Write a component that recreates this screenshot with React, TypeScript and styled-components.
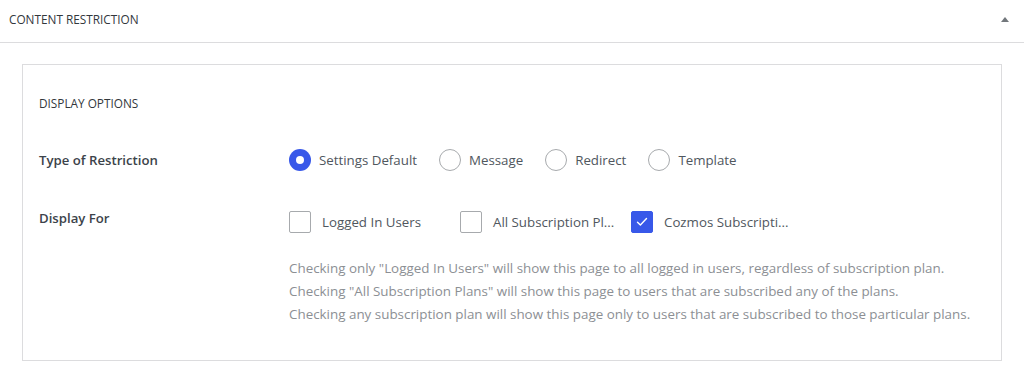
import React from "react";
import styled, { createGlobalStyle } from "styled-components";

const Global = createGlobalStyle`
  html, body { margin: 0; padding: 0; background: #ffffff; }
  body { font-family: "Open Sans", "Noto Sans", sans-serif; }
  * { box-sizing: border-box; }
`;

const Panel = styled.section`
  width: 1024px;
  background: #fff;
`;

const PanelHeader = styled.header`
  height: 43px;
  display: flex;
  align-items: center;
  justify-content: space-between;
  padding: 0 15px 4px 9px;
  border-bottom: 1px solid #dcdcde;
`;

const PanelTitle = styled.h2`
  margin: 0;
  font-size: 11.8px;
  font-weight: 400;
  color: #32373c;
`;

const Toggle = styled.span`
  width: 0;
  height: 0;
  border-left: 4px solid transparent;
  border-right: 4px solid transparent;
  border-bottom: 5px solid #72777c;
`;

const PanelBody = styled.div`
  padding: 21px 22px 15px 22px;
`;

const Box = styled.div`
  border: 1px solid #dcdcde;
  padding: 28px 16px 34px 16px;
`;

const SectionTitle = styled.h3`
  margin: 0;
  font-size: 11.8px;
  line-height: 20px;
  font-weight: 400;
  color: #32373c;
`;

const Row = styled.div<{ $top: number }>`
  display: flex;
  align-items: flex-start;
  margin-top: ${(p) => p.$top}px;
`;

const Label = styled.div<{ $lh: number }>`
  width: 250px;
  flex: none;
  font-size: 13.2px;
  font-weight: 600;
  color: #3c434a;
  line-height: ${(p) => p.$lh}px;
`;

const Field = styled.div`
  display: flex;
  flex-direction: column;
`;

const Options = styled.div`
  display: flex;
  align-items: center;
`;

const RadioOption = styled.label`
  display: flex;
  align-items: center;
  gap: 8px;
  margin-right: 22px;
  font-size: 13.3px;
  color: #50575e;
  line-height: 22px;
`;

const RadioCircle = styled.span<{ $on?: boolean }>`
  width: 22px;
  height: 22px;
  border-radius: 50%;
  flex: none;
  border: ${(p) => (p.$on ? "none" : "1px solid #a7aaad")};
  background: ${(p) => (p.$on ? "#3858e9" : "#fff")};
  display: flex;
  align-items: center;
  justify-content: center;
  &::after {
    content: "";
    display: ${(p) => (p.$on ? "block" : "none")};
    width: 8px;
    height: 8px;
    border-radius: 50%;
    background: #fff;
  }
`;

const CheckOption = styled.label`
  display: flex;
  align-items: center;
  gap: 11px;
  width: 161px;
  margin-right: 10px;
  font-size: 13.3px;
  color: #50575e;
  line-height: 22px;
`;

const CheckBox = styled.span<{ $on?: boolean }>`
  width: 22px;
  height: 22px;
  flex: none;
  border-radius: 2px;
  border: ${(p) => (p.$on ? "1px solid #3858e9" : "1px solid #a7aaad")};
  background: ${(p) => (p.$on ? "#3858e9" : "#fff")};
  display: flex;
  align-items: center;
  justify-content: center;
`;

const CheckText = styled.span`
  white-space: nowrap;
`;

const Notes = styled.div`
  margin-top: 24px;
`;

const Note = styled.p`
  margin: 0;
  font-size: 13.4px;
  line-height: 23px;
  color: #8c8f94;
  white-space: nowrap;
`;

const Check = () => (
  <svg width="12" height="10" viewBox="0 0 12 10" fill="none">
    <path d="M1.5 5.2 L4.4 8 L10.5 1.6" stroke="#fff" strokeWidth="1.4" strokeLinecap="round" strokeLinejoin="round" />
  </svg>
);

export default function App() {
  return (
    <>
      <Global />
      <Panel>
        <PanelHeader>
          <PanelTitle>CONTENT RESTRICTION</PanelTitle>
          <Toggle />
        </PanelHeader>
        <PanelBody>
          <Box>
            <SectionTitle>DISPLAY OPTIONS</SectionTitle>
            <Row $top={36}>
              <Label $lh={22}>Type of Restriction</Label>
              <Options>
                <RadioOption><RadioCircle $on />Settings Default</RadioOption>
                <RadioOption><RadioCircle />Message</RadioOption>
                <RadioOption><RadioCircle />Redirect</RadioOption>
                <RadioOption><RadioCircle />Template</RadioOption>
              </Options>
            </Row>
            <Row $top={40}>
              <Label $lh={14}>Display For</Label>
              <Field>
                <Options>
                  <CheckOption><CheckBox /><CheckText>Logged In Users</CheckText></CheckOption>
                  <CheckOption><CheckBox /><CheckText>All Subscription Pl...</CheckText></CheckOption>
                  <CheckOption><CheckBox $on><Check /></CheckBox><CheckText>Cozmos Subscripti...</CheckText></CheckOption>
                </Options>
                <Notes>
                  <Note>Checking only "Logged In Users" will show this page to all logged in users, regardless of subscription plan.</Note>
                  <Note>Checking "All Subscription Plans" will show this page to users that are subscribed any of the plans.</Note>
                  <Note>Checking any subscription plan will show this page only to users that are subscribed to those particular plans.</Note>
                </Notes>
              </Field>
            </Row>
          </Box>
        </PanelBody>
      </Panel>
    </>
  );
}
